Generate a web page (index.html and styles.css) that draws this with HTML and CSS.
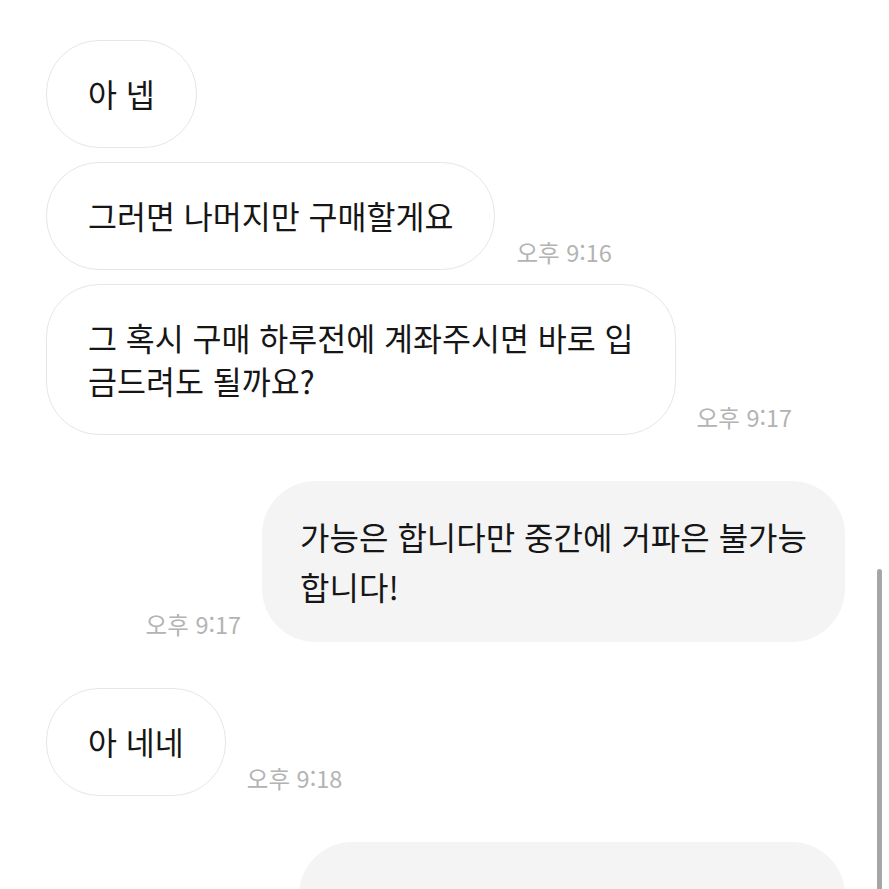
FILE: index.html
```html
<!DOCTYPE html>
<html lang="ko">

<head>
    <meta charset="UTF-8">
    <meta name="viewport" content="width=device-width, initial-scale=1.0">
    <title>채팅</title>
    <link rel="stylesheet" href="styles.css">
</head>

<body>
    <div class="chat">
        <div class="group">
            <div class="row">
                <div class="bubble">아 넵</div>
            </div>
            <div class="row">
                <div class="bubble">그러면 나머지만 구매할게요</div>
                <span class="time">오후 9:16</span>
            </div>
            <div class="row">
                <div class="bubble">그 혹시 구매 하루전에 계좌주시면 바로 입<br>금드려도 될까요?</div>
                <span class="time">오후 9:17</span>
            </div>
        </div>

        <div class="group">
            <div class="row mine">
                <span class="time">오후 9:17</span>
                <div class="bubble">가능은 합니다만 중간에 거파은 불가능<br>합니다!</div>
            </div>
        </div>

        <div class="group">
            <div class="row">
                <div class="bubble">아 네네</div>
                <span class="time">오후 9:18</span>
            </div>
        </div>

        <div class="group">
            <div class="row mine">
                <div class="bubble pending"></div>
            </div>
        </div>
    </div>

    <div class="scroll-indicator"></div>
</body>

</html>
```

FILE: styles.css
```css
html,
body {
    height: 100%;
}

body {
    font-family: "Noto Sans CJK KR", "Noto Sans", sans-serif;
    background-color: #fff;
    color: #161616;
    margin: 0;
    overflow: hidden;
}

.chat {
    display: flex;
    flex-direction: column;
    gap: 46px;
    padding: 40px 44px 0 46px;
}

.group {
    display: flex;
    flex-direction: column;
    gap: 14px;
}

.row {
    display: flex;
    align-items: flex-end;
    gap: 21px;
}

.row.mine {
    justify-content: flex-end;
}

.bubble {
    font-size: 31.5px;
    line-height: 43px;
    padding: 31px 41px 32px 41px;
    border: 1.5px solid #e6e6e6;
    border-radius: 53px;
    background-color: #fff;
    white-space: nowrap;
}

.mine .bubble {
    font-size: 32px;
    background-color: #f4f4f4;
    border-color: #f4f4f4;
    line-height: 50px;
    padding: 29px 37px 30px 37px;
}

.bubble.pending {
    width: 470px;
    height: 120px;
}

.time {
    font-size: 23.5px;
    line-height: 1;
    color: #b3b3b3;
    margin-bottom: 6px;
    white-space: nowrap;
}

.scroll-indicator {
    position: fixed;
    left: 877px;
    top: 569px;
    width: 5px;
    height: 340px;
    border-radius: 3px;
    background-color: #a6a6a6;
}
```
